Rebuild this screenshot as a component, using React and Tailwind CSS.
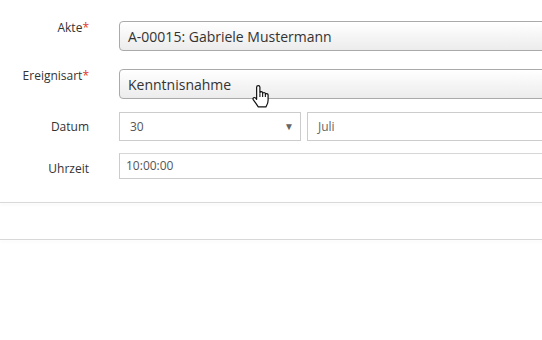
import React from "react";

function HandCursor() {
  return (
    <svg
      width="20"
      height="24"
      viewBox="0 0 18 22"
      className="absolute left-[251px] top-[84px]"
    >
      <path
        d="M5 14 V3 Q5 1.5 6.5 1.5 Q8 1.5 8 3 V8 Q8 7 9.25 7 Q10.5 7 10.5 8 V8.8 Q10.5 7.8 11.75 7.8 Q13 7.8 13 8.8 V9.6 Q13 8.8 14.2 8.8 Q15.5 8.8 15.5 9.8 V15 Q15.5 18 14 20 L13.5 21 H6.5 L4.5 18 L2 14.5 Q1.2 13.3 2.2 12.6 Q3.2 12 4.2 13 L5 14 Z"
        fill="#fff"
        stroke="#111"
        strokeWidth="1.1"
        strokeLinejoin="round"
      />
      <path d="M8 8.5 V12 M10.5 9 V12 M13 9.8 V12" stroke="#111" strokeWidth="1" />
    </svg>
  );
}

function Label({ text, required, className }) {
  return (
    <div className={`w-[89px] shrink-0 text-right text-[12px] leading-4 text-[#333] ${className}`}>
      {text}
      {required && <span className="text-[#e2372b]">*</span>}
    </div>
  );
}

export default function App() {
  return (
    <div className="relative w-[542px] h-[340px] overflow-hidden bg-white font-['Open_Sans',sans-serif]">
      <div className="w-[600px] pt-[21px] flex flex-col">
        <div className="flex items-start">
          <Label text="Akte" required className="-mt-px" />
          <div className="ml-[30px] flex-1 h-[30px] flex items-center pl-2 border border-[#aaa] rounded-[4px] bg-gradient-to-b from-white to-[#ececec] text-[14px] text-[#333]">
            A-00015: Gabriele Mustermann
          </div>
        </div>

        <div className="flex items-start mt-[18px]">
          <Label text="Ereignisart" required className="-mt-[1.5px]" />
          <div className="ml-[30px] flex-1 h-[30px] flex items-center pl-2 border border-[#aaa] rounded-[4px] bg-gradient-to-b from-white to-[#ececec] text-[14px] text-[#333]">
            Kenntnisnahme
          </div>
        </div>

        <div className="flex items-start mt-[13px]">
          <Label text="Datum" className="mt-[6.5px]" />
          <div className="ml-[30px] w-[182px] h-[29px] flex items-center justify-between pl-[10px] pr-[6px] border border-[#ccc] text-[12px] text-[#555]">
            <span>30</span>
            <span className="text-[10px] text-[#666]">▼</span>
          </div>
          <div className="ml-[6px] flex-1 h-[29px] flex items-center pl-[10px] border border-[#ccc] text-[12px] text-[#666]">
            Juli
          </div>
        </div>

        <div className="flex items-start mt-[12px]">
          <Label text="Uhrzeit" className="mt-[8px]" />
          <div className="ml-[30px] flex-1 h-[26px] flex items-center pl-[6px] border border-[#ccc] border-t-[#d6d6d6] text-[12px] text-[#555]">
            10:00:00
          </div>
        </div>

        <div className="mt-[23px] h-px bg-[#d8d8d8] shadow-[0_2px_3px_rgba(0,0,0,0.06)]" />
        <div className="mt-[36px] h-px bg-[#d8d8d8] shadow-[0_2px_3px_rgba(0,0,0,0.05)]" />
      </div>
      <HandCursor />
    </div>
  );
}
